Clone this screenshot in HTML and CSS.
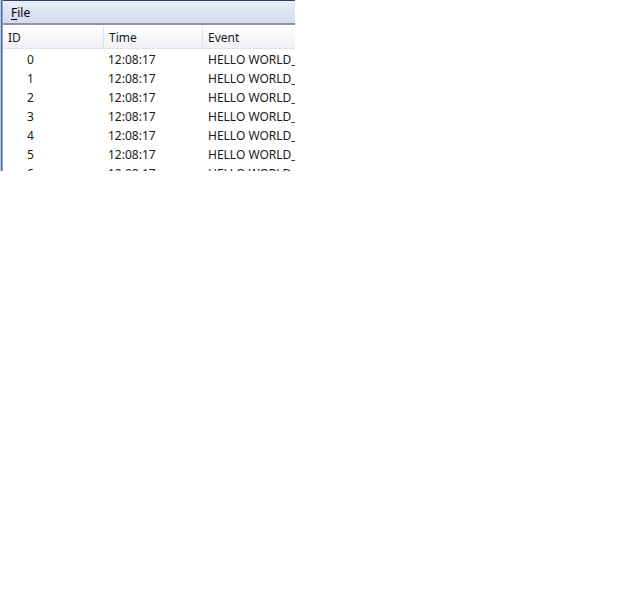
FILE: index.html
```html
<!DOCTYPE html>
<html>
<head>
<meta charset="utf-8">
<link rel="stylesheet" href="styles.css">
</head>
<body>
<div class="window">
  <div class="frame-left"></div>
  <div class="content">
    <div class="menubar"><span class="menu-item"><u>F</u>ile</span></div>
    <div class="table">
      <div class="header">
        <div class="hcell c-id">ID</div>
        <div class="hcell c-time">Time</div>
        <div class="hcell c-event">Event</div>
      </div>
      <div class="row"><div class="cell c-id num">0</div><div class="cell c-time">12:08:17</div><div class="cell c-event">HELLO WORLD_</div></div>
      <div class="row"><div class="cell c-id num">1</div><div class="cell c-time">12:08:17</div><div class="cell c-event">HELLO WORLD_</div></div>
      <div class="row"><div class="cell c-id num">2</div><div class="cell c-time">12:08:17</div><div class="cell c-event">HELLO WORLD_</div></div>
      <div class="row"><div class="cell c-id num">3</div><div class="cell c-time">12:08:17</div><div class="cell c-event">HELLO WORLD_</div></div>
      <div class="row"><div class="cell c-id num">4</div><div class="cell c-time">12:08:17</div><div class="cell c-event">HELLO WORLD_</div></div>
      <div class="row"><div class="cell c-id num">5</div><div class="cell c-time">12:08:17</div><div class="cell c-event">HELLO WORLD_</div></div>
      <div class="row"><div class="cell c-id num">6</div><div class="cell c-time">12:08:17</div><div class="cell c-event">HELLO WORLD_</div></div>
    </div>
  </div>
</div>
</body>
</html>
```

FILE: styles.css
```css
html, body {
  margin: 0;
  padding: 0;
  background: #ffffff;
}
body {
  font-family: "Noto Sans", "DejaVu Sans", sans-serif;
  font-size: 12px;
  color: #1a1a1a;
}
.window {
  width: 295px;
  height: 171px;
  overflow: hidden;
  display: flex;
  background: #ffffff;
}
.frame-left {
  width: 3px;
  flex: none;
  background: linear-gradient(to right, #b9cbe6 0, #b9cbe6 1px, #4d6a9c 1px, #4d6a9c 2px, #8da6cf 2px);
}
.content {
  flex: 1;
  display: flex;
  flex-direction: column;
  min-width: 0;
}
.menubar {
  flex: none;
  height: 22px;
  border-top: 1px solid #2f3f5f;
  border-bottom: 2px solid #8e93a0;
  background: linear-gradient(to bottom, #e9edf7 0%, #dde3f3 50%, #d5dcef 100%);
  display: flex;
  align-items: center;
  padding-left: 8px;
}
.menu-item {
  color: #000;
  line-height: 16px;
  padding-top: 2px;
}
.menu-item u {
  text-decoration-thickness: 1px;
  text-underline-offset: 2px;
}
.table {
  flex: none;
  padding-top: 1px;
}
.header {
  display: flex;
  height: 22px;
  border-bottom: 1px solid #e2e4e8;
  background: linear-gradient(to bottom, #ffffff 0%, #f7f8fa 45%, #f0f1f4 100%);
}
.hcell {
  display: flex;
  align-items: center;
  padding-left: 5px;
  border-right: 1px solid #dfe2e7;
  box-sizing: border-box;
  color: #1a1a1a;
}
.c-id { width: 101px; flex: none; }
.c-time { width: 99px; flex: none; }
.c-event { flex: 1; border-right: none; }
.row {
  display: flex;
  height: 19px;
  align-items: center;
}
.table .header + .row { margin-top: 1px; }
.cell {
  box-sizing: border-box;
  padding-left: 4px;
  white-space: nowrap;
  overflow: hidden;
}
.cell.c-event {
  padding-left: 5px;
}
.cell.num {
  padding-left: 24px;
}
```
